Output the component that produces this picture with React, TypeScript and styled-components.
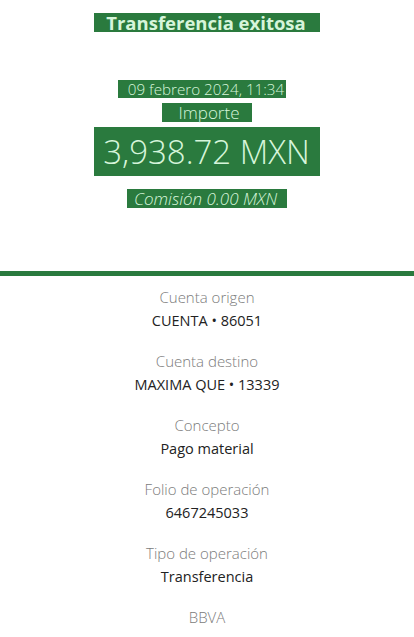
import React from 'react';
import styled, { createGlobalStyle } from 'styled-components';

const GlobalStyle = createGlobalStyle`
  html, body {
    margin: 0;
    padding: 0;
    background: #ffffff;
    font-family: "Open Sans", Lato, "Liberation Sans", sans-serif;
  }
`;

const GREEN = '#2a7a3e';
const MINT = '#d6f5da';

const Page = styled.div`
  width: 414px;
  height: 637px;
  overflow: hidden;
  background: #ffffff;
`;

const Summary = styled.section`
  height: 271px;
  display: flex;
  flex-direction: column;
  align-items: center;
`;

const Highlight = styled.span<{ size: number; weight?: number; italic?: boolean; lh: number; pad: string }>`
  display: inline-block;
  background: ${GREEN};
  color: ${MINT};
  font-size: ${p => p.size}px;
  font-weight: ${p => p.weight ?? 300};
  font-style: ${p => (p.italic ? 'italic' : 'normal')};
  line-height: ${p => p.lh}px;
  padding: ${p => p.pad};
  white-space: nowrap;
`;

const Row = styled.div<{ mt: number; shift?: number }>`
  margin-top: ${p => p.mt}px;
  padding-right: ${p => p.shift ?? 0}px;
  display: flex;
  justify-content: center;
`;

const Divider = styled.div`
  height: 5px;
  background: ${GREEN};
`;

const Details = styled.section`
  padding-top: 9px;
  display: flex;
  flex-direction: column;
  align-items: center;
  gap: 16px;
`;

const Item = styled.div`
  display: flex;
  flex-direction: column;
  align-items: center;
`;

const Label = styled.div`
  font-size: 15px;
  line-height: 24px;
  font-weight: 300;
  color: #7b7b7b;
`;

const Value = styled.div`
  font-size: 14.5px;
  line-height: 24px;
  font-weight: 400;
  color: #222222;
`;

const details = [
  { label: 'Cuenta origen', value: 'CUENTA • 86051' },
  { label: 'Cuenta destino', value: 'MAXIMA QUE • 13339' },
  { label: 'Concepto', value: 'Pago material' },
  { label: 'Folio de operación', value: '6467245033' },
  { label: 'Tipo de operación', value: 'Transferencia' },
];

export default function App() {
  return (
    <Page>
      <GlobalStyle />
      <Summary>
        <Row mt={13}>
          <Highlight size={18.5} weight={700} lh={19} pad="0 14px 0 12px">Transferencia exitosa</Highlight>
        </Row>
        <Row mt={48} shift={10}>
          <Highlight size={15.2} lh={18} pad="0 2px 0 10px">09 febrero 2024, 11:34</Highlight>
        </Row>
        <Row mt={5}>
          <Highlight size={17} lh={19} pad="0 12px 0 16px">Importe</Highlight>
        </Row>
        <Row mt={5}>
          <Highlight size={33} lh={49} pad="0 10px 0 9px">3,938.72 MXN</Highlight>
        </Row>
        <Row mt={13}>
          <Highlight size={17} italic lh={19} pad="0 10px 0 7px">Comisión 0.00 MXN</Highlight>
        </Row>
      </Summary>
      <Divider />
      <Details>
        {details.map(d => (
          <Item key={d.label}>
            <Label>{d.label}</Label>
            <Value>{d.value}</Value>
          </Item>
        ))}
        <Item>
          <Label>BBVA</Label>
        </Item>
      </Details>
    </Page>
  );
}
